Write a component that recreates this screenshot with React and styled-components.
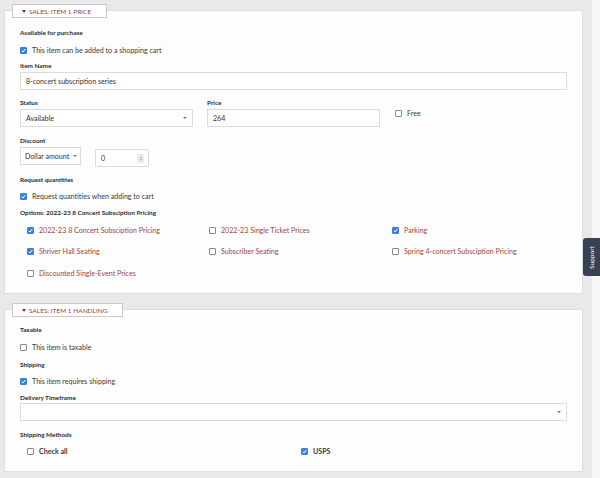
import React from "react";
import styled, { createGlobalStyle } from "styled-components";

const GlobalStyle = createGlobalStyle`
  html, body {
    margin: 0;
    padding: 0;
    background: #e9e9eb;
    font-family: Lato, "Liberation Sans", sans-serif;
  }
`;

const options = [
  { label: "2022-23 8 Concert Subsciption Pricing", checked: true },
  { label: "2022-23 Single Ticket Prices", checked: false },
  { label: "Parking", checked: true },
  { label: "Shriver Hall Seating", checked: true },
  { label: "Subscriber Seating", checked: false },
  { label: "Spring 4-concert Subsciption Pricing", checked: false },
  { label: "Discounted Single-Event Prices", checked: false },
];

function Check({ checked }) {
  return (
    <Box checked={checked}>
      {checked && (
        <svg width="5" height="5" viewBox="0 0 10 10">
          <path d="M1.5 5.5 L4 8 L8.5 2" stroke="#fff" strokeWidth="2" fill="none" />
        </svg>
      )}
    </Box>
  );
}

export default function App() {
  return (
    <Page>
      <GlobalStyle />
      <Main>
        <Panel pt={17} pb={13}>
          <Legend>
            <LegendArrow />
            Sales: Item 1 Price
          </Legend>
          <Label>Available for purchase</Label>
          <CheckRow mt={5}>
            <Check checked />
            <span>This item can be added to a shopping cart</span>
          </CheckRow>
          <Label mt={4}>Item Name</Label>
          <TextInput mt={1}>8-concert subscription series</TextInput>

          <StatusRow>
            <Field w={173}>
              <Label>Status</Label>
              <SelectBox mt={1}>
                Available
                <Caret />
              </SelectBox>
            </Field>
            <Field w={173}>
              <Label>Price</Label>
              <TextInput mt={1}>264</TextInput>
            </Field>
            <FreeCheck>
              <Check />
              <span>Free</span>
            </FreeCheck>
          </StatusRow>

          <Label mt={9}>Discount</Label>
          <DiscountRow>
            <SmallSelect>
              Dollar amount
              <Caret />
            </SmallSelect>
            <NumberBox>
              0
              <Spinner>
                <SpinUp />
                <SpinDown />
              </Spinner>
            </NumberBox>
          </DiscountRow>

          <Label mt={8}>Request quantities</Label>
          <CheckRow mt={4}>
            <Check checked />
            <span>Request quantities when adding to cart</span>
          </CheckRow>
          <Label mt={5}>Options: 2022-23 8 Concert Subsciption Pricing</Label>
          <OptionGrid>
            {options.map((o) => (
              <CheckRow key={o.label} link>
                <Check checked={o.checked} />
                <span>{o.label}</span>
              </CheckRow>
            ))}
          </OptionGrid>
        </Panel>

        <Panel pt={15} pb={13}>
          <Legend>
            <LegendArrow />
            Sales: Item 1 Handling
          </Legend>
          <Label>Taxable</Label>
          <CheckRow mt={5}>
            <Check />
            <span>This item is taxable</span>
          </CheckRow>
          <Label mt={6}>Shipping</Label>
          <CheckRow mt={4}>
            <Check checked />
            <span>This item requires shipping</span>
          </CheckRow>
          <Label mt={5}>Delivery Timeframe</Label>
          <SelectBox>
            <Caret />
          </SelectBox>
          <Label mt={9}>Shipping Methods</Label>
          <MethodGrid>
            <CheckRow strong>
              <Check />
              <span>Check all</span>
            </CheckRow>
            <CheckRow strong>
              <Check checked />
              <span>USPS</span>
            </CheckRow>
          </MethodGrid>
        </Panel>
      </Main>
      <ScrollTrack />
      <SupportTab>
        <span>Support</span>
      </SupportTab>
    </Page>
  );
}

const Page = styled.div`
  display: flex;
  width: 600px;
  height: 478px;
  overflow: hidden;
  position: relative;
`;

const Main = styled.div`
  flex: 1;
  display: flex;
  flex-direction: column;
  gap: 15px;
  padding: 10px 9px 0 4px;
`;

const ScrollTrack = styled.div`
  width: 8px;
  background: #f8f8f8;
`;

const Panel = styled.section`
  position: relative;
  display: flex;
  flex-direction: column;
  background: #fdfdfd;
  border: 1px solid #dedee0;
  padding: ${(p) => p.pt}px 15px ${(p) => p.pb}px 15px;
`;

const Legend = styled.div`
  position: absolute;
  top: -7px;
  left: 7px;
  height: 12px;
  display: flex;
  align-items: center;
  gap: 3px;
  padding: 0 15px 0 9px;
  background: #fff;
  border: 1px solid #c9c9cb;
  color: #9c3b37;
  font-size: 6.5px;
  text-transform: uppercase;
`;

const LegendArrow = styled.span`
  width: 0;
  height: 0;
  border-left: 2.5px solid transparent;
  border-right: 2.5px solid transparent;
  border-top: 3px solid #9c2b27;
`;

const Label = styled.div`
  height: 10px;
  line-height: 10px;
  margin-top: ${(p) => p.mt || 0}px;
  font-size: 6.4px;
  font-weight: 700;
  color: #2c2c2c;
  white-space: nowrap;
`;

const CheckRow = styled.div`
  display: flex;
  align-items: center;
  gap: 5px;
  height: 14px;
  margin-top: ${(p) => p.mt || 0}px;
  font-size: 7.1px;
  color: ${(p) => (p.link ? "#a3453f" : "#3a3a3a")};
  font-weight: ${(p) => (p.strong ? 700 : 400)};
  white-space: nowrap;
`;

const Box = styled.span`
  width: 7px;
  height: 7px;
  box-sizing: border-box;
  border-radius: 1px;
  display: inline-flex;
  align-items: center;
  justify-content: center;
  flex-shrink: 0;
  background: ${(p) => (p.checked ? "#3c7fe1" : "#fff")};
  border: 1px solid ${(p) => (p.checked ? "#3c7fe1" : "#8a8a8e")};
`;

const TextInput = styled.div`
  height: 18px;
  box-sizing: border-box;
  margin-top: ${(p) => p.mt || 0}px;
  border: 1px solid #dcdcdc;
  background: #fff;
  display: flex;
  align-items: center;
  padding-left: 5px;
  font-size: 7.1px;
  color: #333;
  white-space: nowrap;
`;

const SelectBox = styled(TextInput)`
  position: relative;
  justify-content: space-between;
  padding-right: 5px;
`;

const Caret = styled.span`
  margin-left: auto;
  width: 0;
  height: 0;
  border-left: 2px solid transparent;
  border-right: 2px solid transparent;
  border-top: 2.5px solid #777;
`;

const StatusRow = styled.div`
  display: flex;
  gap: 14px;
  margin-top: 8px;
`;

const Field = styled.div`
  width: ${(p) => p.w}px;
  display: flex;
  flex-direction: column;
`;

const FreeCheck = styled(CheckRow)`
  margin-top: 8px;
  margin-left: 1px;
`;

const DiscountRow = styled.div`
  display: flex;
  align-items: flex-start;
  gap: 14px;
  margin-top: 1px;
  height: 20px;
`;

const SmallSelect = styled(TextInput)`
  width: 61px;
  padding-left: 4px;
  padding-right: 5px;
  & > span {
    margin-left: 4px;
  }
`;

const NumberBox = styled(TextInput)`
  width: 54px;
  margin-top: 2px;
  padding-right: 4px;
  justify-content: space-between;
`;

const Spinner = styled.span`
  width: 7px;
  height: 9px;
  background: #ececee;
  display: flex;
  flex-direction: column;
  align-items: center;
  justify-content: center;
  gap: 1px;
`;

const SpinUp = styled.span`
  width: 0;
  height: 0;
  border-left: 1.5px solid transparent;
  border-right: 1.5px solid transparent;
  border-bottom: 2px solid #999;
`;

const SpinDown = styled.span`
  width: 0;
  height: 0;
  border-left: 1.5px solid transparent;
  border-right: 1.5px solid transparent;
  border-top: 2px solid #999;
`;

const OptionGrid = styled.div`
  display: grid;
  grid-template-columns: 182px 183px 1fr;
  row-gap: 7.5px;
  margin-top: 5px;
  padding-left: 7px;
`;

const MethodGrid = styled.div`
  display: grid;
  grid-template-columns: 274px 1fr;
  margin-top: 4px;
  padding-left: 7px;
`;

const SupportTab = styled.div`
  position: absolute;
  right: 0;
  top: 238px;
  width: 17px;
  height: 38px;
  background: #364253;
  border-radius: 3px 0 0 3px;
  display: flex;
  align-items: center;
  justify-content: center;
  span {
    transform: rotate(-90deg);
    color: #fff;
    font-size: 6.5px;
    white-space: nowrap;
  }
`;
